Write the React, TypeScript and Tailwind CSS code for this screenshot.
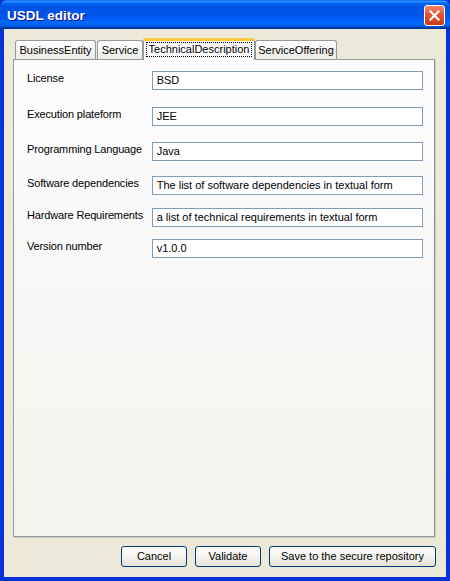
import React from "react";

const fields = [
  { label: "License", value: "BSD", mt: "mt-[10px]" },
  { label: "Execution plateform", value: "JEE", mt: "mt-[17px]" },
  { label: "Programming Language", value: "Java", mt: "mt-[16px]" },
  { label: "Software dependencies", value: "The list of software dependencies in textual form", mt: "mt-[15px]" },
  { label: "Hardware Requirements", value: "a list of technical requirements in textual form", mt: "mt-[13px]" },
  { label: "Version number", value: "v1.0.0", mt: "mt-[12px]" },
];

const tabs = [
  { name: "BusinessEntity", w: "w-[81px]" },
  { name: "Service", w: "w-[46px]" },
  { name: "TechnicalDescription", w: "w-[112px]", active: true },
  { name: "ServiceOffering", w: "w-[82px]" },
];

const CloseButton = () => (
  <div className="w-[21px] h-[21px] rounded-[3px] border border-white bg-gradient-to-b from-[#f0846a] via-[#e0502c] to-[#c63b18] flex items-center justify-center">
    <svg width="11" height="11" viewBox="0 0 11 11">
      <path d="M1.5 1.5 L9.5 9.5 M9.5 1.5 L1.5 9.5" stroke="white" strokeWidth="2.2" strokeLinecap="square" />
    </svg>
  </div>
);

const XpButton = ({ label, w }: { label: string; w: string }) => (
  <button
    type="button"
    className={`${w} h-[21px] rounded-[3px] border border-[#003c74] bg-gradient-to-b from-white via-[#f4f3ee] to-[#e3e1d6] text-[11px] text-black leading-none`}
  >
    {label}
  </button>
);

export default function App() {
  return (
    <div
      className="w-[450px] h-[581px] flex flex-col bg-[#0831d9]"
      style={{ fontFamily: '"Liberation Sans", Arial, sans-serif' }}
    >
      {/* title bar */}
      <div className="h-[29px] rounded-t-[7px] flex items-center justify-between pl-[7px] pr-[5px] pt-[2px] bg-[linear-gradient(to_bottom,#0058ee_0%,#3593ff_4%,#288eff_6%,#127dff_8%,#036ffc_10%,#0262ee_14%,#0057e5_20%,#0054e3_24%,#0055eb_56%,#005bf5_66%,#026afe_76%,#0062ef_86%,#0052d6_92%,#0040ab_94%,#003092_100%)]">
        <span className="mt-[1px] text-white font-bold text-[13.5px] [text-shadow:1px_1px_#0f1089]">USDL editor</span>
        <CloseButton />
      </div>

      {/* body */}
      <div className="flex-1 mx-[4px] mb-[4px] bg-[#ece9d8] flex flex-col pl-[9px] pr-[11px] pt-[9px]">
        {/* tabs */}
        <div className="flex items-end h-[22px] pl-[2px] gap-[1px] relative z-10 -mb-[1px]">
          {tabs.map((t) =>
            t.active ? (
              <div
                key={t.name}
                className={`${t.w} h-[22px] -mx-[1px] rounded-t-[3px] border-x border-[#919b9c] border-t-[3px] border-t-[#ffc83c] bg-[#fcfcfe] flex items-start justify-center pt-[1px]`}
              >
                <span className="px-[2px] border border-dotted border-black text-[11px] leading-[13px] text-black">
                  {t.name}
                </span>
              </div>
            ) : (
              <div
                key={t.name}
                className={`${t.w} h-[19px] mb-[1px] rounded-t-[3px] border border-b-0 border-[#919b9c] bg-gradient-to-b from-white to-[#ecebe6] flex items-center justify-center text-[11px] text-black`}
              >
                {t.name}
              </div>
            )
          )}
        </div>

        {/* panel */}
        <div className="h-[478px] border border-[#919b9c] border-r-[#8a8f90] shadow-[1px_1px_0_#d0cec3] bg-gradient-to-b from-[#fcfcfe] to-[#f4f3ee] pl-[13px] pr-[11px] pt-[1px]">
          {fields.map((f) => (
            <div key={f.label} className={`${f.mt} flex items-center h-[19px]`}>
              <span className="w-[125px] text-[11px] tracking-[-0.15px] text-black -mt-[4px] whitespace-nowrap">{f.label}</span>
              <div className="w-[272px] h-[19px] border border-[#7f9db9] bg-white flex items-center pl-[4px] text-[11px] text-black whitespace-nowrap overflow-hidden">
                {f.value}
              </div>
            </div>
          ))}
        </div>

        {/* buttons */}
        <div className="flex justify-end gap-[8px] mt-[9px] -mr-[1px]">
          <XpButton label="Cancel" w="w-[66px]" />
          <XpButton label="Validate" w="w-[66px]" />
          <XpButton label="Save to the secure repository" w="w-[167px]" />
        </div>
      </div>
    </div>
  );
}
